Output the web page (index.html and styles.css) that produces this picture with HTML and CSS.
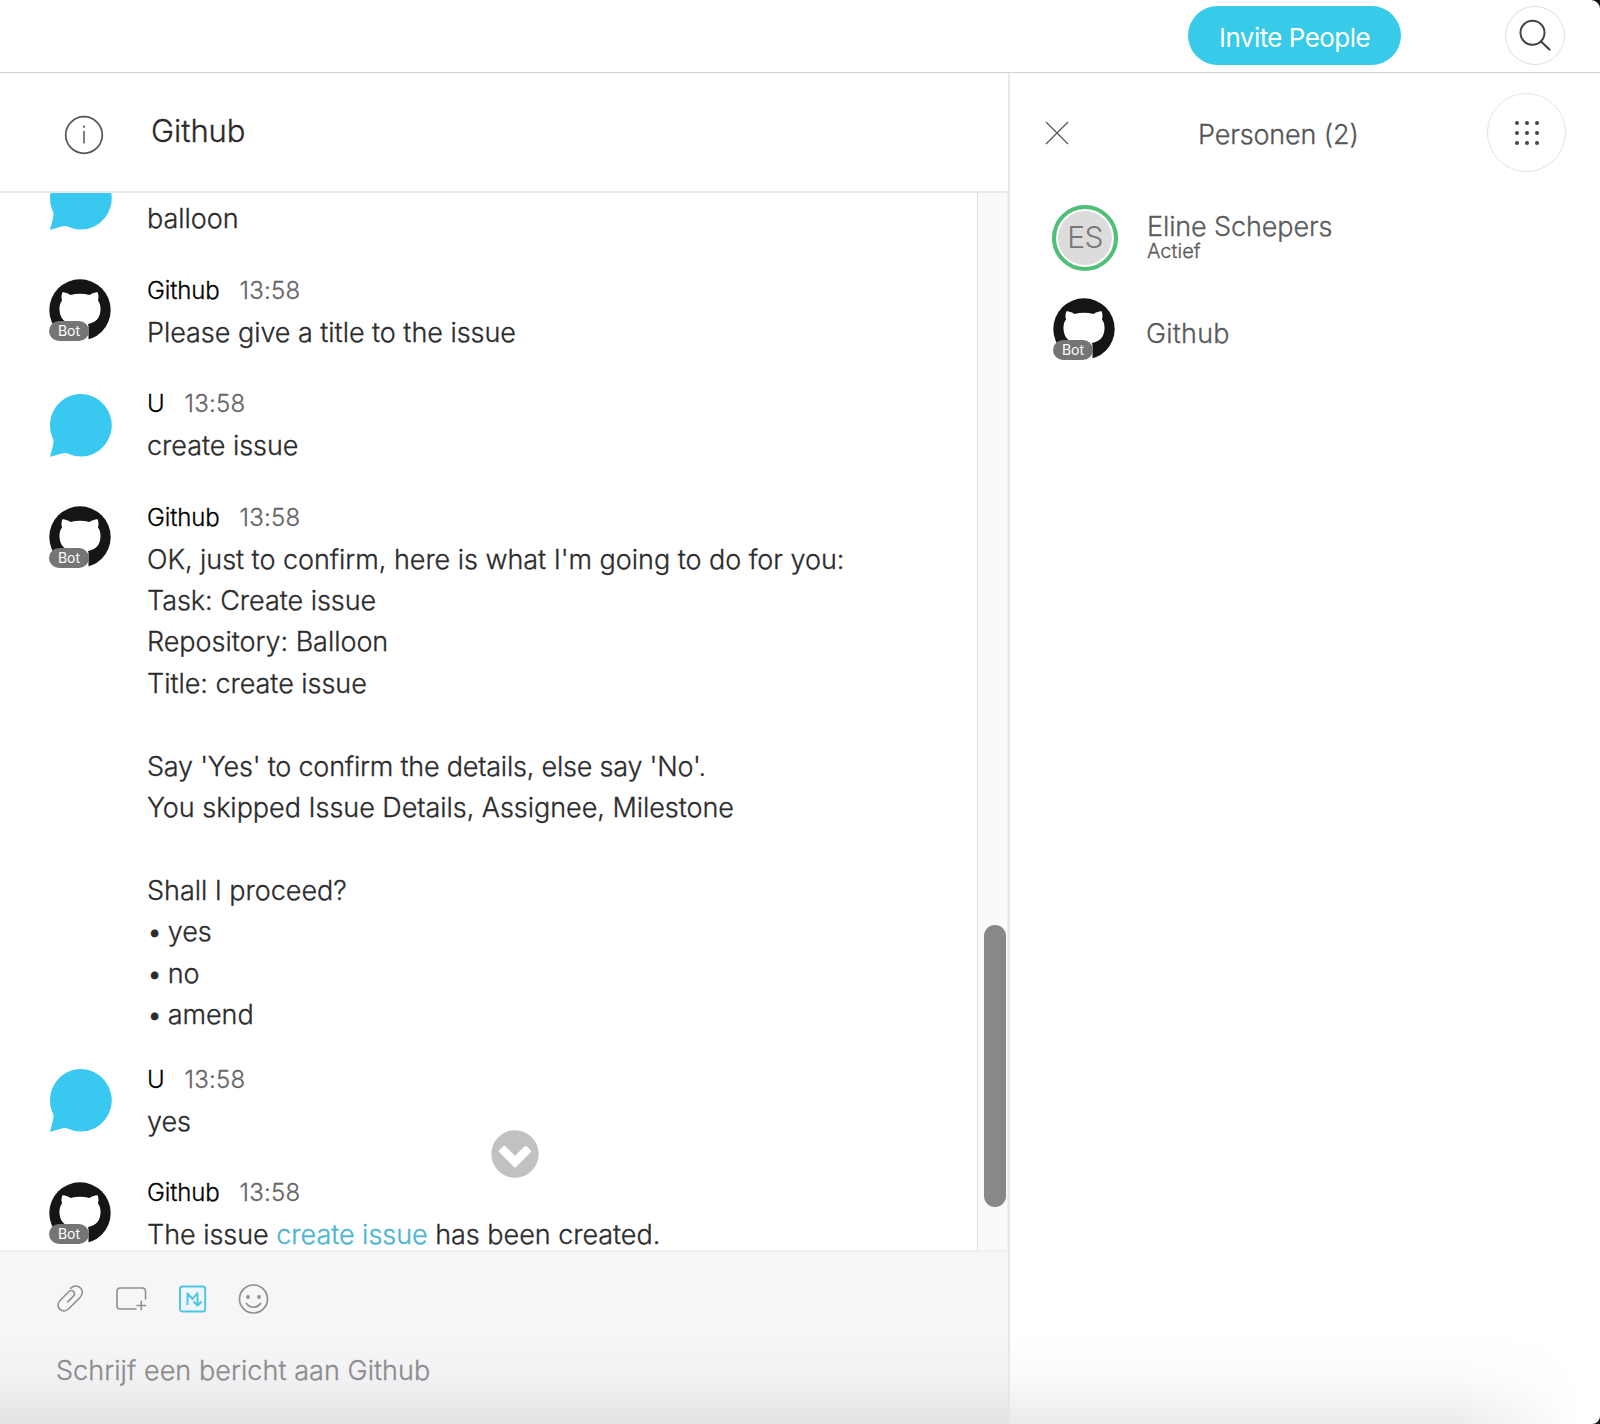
FILE: index.html
```html
<!DOCTYPE html>
<html lang="nl">
<head>
<meta charset="utf-8">
<title>Github</title>
<link rel="stylesheet" href="styles.css">
</head>
<body>
<svg class="defs" width="0" height="0" aria-hidden="true">
  <symbol id="octocat" viewBox="0 0 62 62"><circle cx="31" cy="31" r="30.700" fill="#161516"/><path fill="#fff" d="M13.300 13.500c.400-1 4.700.200 8.200 2.400 6-1.500 13-1.500 19 0 3.500-2.200 7.800-3.400 8.200-2.400 1 2.700 1 5.500.3 8 2 2.600 2.700 5.500 2.500 9.500-.400 8-4.500 12.500-12.500 14 .6 1.500.5 3 .5 5V62H23V45c-8-1.500-12.100-6-12.500-14-.2-4 .5-6.900 2.500-9.500-.7-2.500-.7-5.300.3-8z"/></symbol>
  <symbol id="bubble" viewBox="0 0 62 63"><path fill="#38c8f0" d="M31 0a31 31.300 0 1 1-13.500 59.600C15 58 12 59.800 0 62.700c1.700-6 3.800-13 3.500-17A31 31.300 0 0 1 31 0z"/></symbol>
</svg>
<div class="app">
  <header class="topbar">
    <button class="invite">Invite People</button>
    <button class="search"><svg width="60" height="60" viewBox="0 0 60 60" fill="none" stroke="#444" stroke-width="2"><circle cx="27.500" cy="26.800" r="12"/><path d="M36 35.500l8.500 8" stroke-width="2.200" stroke-linecap="round"/></svg></button>
  </header>
  <div class="main">
    <section class="chat">
      <div class="chat-head">
        <svg width="40" height="40" viewBox="0 0 40 40" fill="none" stroke="#555" stroke-width="1.700"><circle cx="20" cy="20" r="18.300"/><path d="M20 16v12.500" stroke-width="1.500"/><circle cx="20" cy="11.700" r="1.100" fill="#555" stroke="none"/></svg>
        <h1 class="title">Github</h1>
      </div>
      <div class="scroll">
        <div class="messages">
          <article class="msg">
            <div class="avatar"><svg class="user-icon"><use href="#bubble"/></svg></div>
            <div class="body"><div class="meta"></div><p class="text">balloon</p></div>
          </article>
          <article class="msg">
            <div class="avatar"><svg class="bot-icon"><use href="#octocat"/></svg><span class="badge">Bot</span></div>
            <div class="body"><div class="meta"><span class="name">Github</span><time class="time">13:58</time></div><p class="text">Please give a title to the issue</p></div>
          </article>
          <article class="msg">
            <div class="avatar"><svg class="user-icon"><use href="#bubble"/></svg></div>
            <div class="body"><div class="meta"><span class="name">U</span><time class="time">13:58</time></div><p class="text">create issue</p></div>
          </article>
          <article class="msg msg-list">
            <div class="avatar"><svg class="bot-icon"><use href="#octocat"/></svg><span class="badge">Bot</span></div>
            <div class="body"><div class="meta"><span class="name">Github</span><time class="time">13:58</time></div><p class="text">OK, just to confirm, here is what I'm going to do for you:<br>Task: Create issue<br>Repository: Balloon<br>Title: create issue<br><br><span class="tight">Say 'Yes' to confirm the details, else say 'No'.</span><br>You skipped Issue Details, Assignee, Milestone<br><br>Shall I proceed?</p>
            <ul class="text options"><li>yes</li><li>no</li><li>amend</li></ul></div>
          </article>
          <article class="msg">
            <div class="avatar"><svg class="user-icon"><use href="#bubble"/></svg></div>
            <div class="body"><div class="meta"><span class="name">U</span><time class="time">13:58</time></div><p class="text">yes</p></div>
          </article>
          <article class="msg msg-last">
            <div class="avatar"><svg class="bot-icon"><use href="#octocat"/></svg><span class="badge">Bot</span></div>
            <div class="body"><div class="meta"><span class="name">Github</span><time class="time">13:58</time></div><p class="text">The issue <a class="link">create issue</a> has been created.</p></div>
          </article>
        </div>
        <div class="track"><div class="thumb"></div></div>
        <svg class="jump" width="48" height="48" viewBox="0 0 48 48"><circle cx="24" cy="24" r="23.700" fill="#c1c1c3"/><path d="M8.300 20.200l4-4a1.500 1.500 0 0 1 2 0l9.700 9.500 9.700-9.500a1.500 1.500 0 0 1 2 0l4 4a1.500 1.500 0 0 1 0 2L25 37a1.500 1.500 0 0 1-2 0L8.300 22.200a1.500 1.500 0 0 1 0-2z" fill="#fff"/></svg>
      </div>
      <footer class="composer">
        <div class="tools">
          <svg width="30" height="32" viewBox="0 0 30 32" fill="none" stroke="#8f8f91" stroke-width="1.600" stroke-linecap="round"><path d="M14.500 5.300C18 2.300 22 2.500 24.500 5s2.500 6.500-.500 9.500L13 25.500c-3 3-6.800 3-9.200.700s-2.400-6 .400-8.900l8.300-8.300c1.700-1.700 3.800-1.700 5-.500s1.300 3.300-.300 4.900l-5.500 5.600"/></svg>
          <svg width="32" height="32" viewBox="0 0 32 32" fill="none" stroke="#8f8f91" stroke-width="1.600" stroke-linecap="round"><path d="M20 26H4A3 3 0 0 1 1 23V8a3 3 0 0 1 3-3h22.500a3 3 0 0 1 3 3v8M25.300 18.300v8.500M21.100 22.500h8.500"/></svg>
          <svg width="28" height="32" viewBox="0 0 28 32" fill="none" stroke="#4fc3e2" stroke-width="1.900"><rect x="1" y="3.500" width="25.200" height="25" rx="2.500" fill="#ebf7fb"/><path d="M8.500 22V10.500l5 5.500 5-6v12M14.500 18.500l4 4 4-4" stroke-linejoin="round"/></svg>
          <svg width="32" height="32" viewBox="0 0 32 32" fill="none" stroke="#8f8f91" stroke-width="1.700" stroke-linecap="round"><circle cx="15.500" cy="16" r="14"/><path d="M8.500 20.500c3.500 5 10.500 5 14 0"/><circle cx="10" cy="14" r="1.900" fill="#8f8f91" stroke="none"/><circle cx="21" cy="14" r="1.900" fill="#8f8f91" stroke="none"/></svg>
        </div>
        <div class="placeholder">Schrijf een bericht aan Github</div>
      </footer>
    </section>
    <aside class="people">
      <div class="people-head">
        <svg width="24" height="24" viewBox="0 0 24 24" stroke="#555" stroke-width="1.200"><path d="M1 1l22 22M23 1L1 23"/></svg>
        <h2 class="people-title">Personen (2)</h2>
        <button class="grid-btn"><svg width="26" height="26" viewBox="0 0 26 26" fill="#444"><circle cx="3" cy="3" r="2"/><circle cx="13" cy="3" r="2"/><circle cx="23" cy="3" r="2"/><circle cx="3" cy="13" r="2"/><circle cx="13" cy="13" r="2"/><circle cx="23" cy="13" r="2"/><circle cx="3" cy="23" r="2"/><circle cx="13" cy="23" r="2"/><circle cx="23" cy="23" r="2"/></svg></button>
      </div>
      <div class="person">
        <div class="initials">ES</div>
        <div><div class="person-name">Eline Schepers</div><div class="status">Actief</div></div>
      </div>
      <div class="person person-bot">
        <div class="avatar"><svg class="bot-icon"><use href="#octocat"/></svg><span class="badge">Bot</span></div>
        <div class="person-name">Github</div>
      </div>
    </aside>
  </div>
  <div class="shade shade-chat"></div>
  <div class="shade shade-people"></div>
</div>
</body>
</html>
```
FILE: styles.css
```css
* { box-sizing: border-box; }
html { background: #10151c; }
body { margin: 0; font-family: Inter, "Liberation Sans", sans-serif; font-weight: 300; color: #2b2b2d; -webkit-text-stroke: 0.300px; }
h1, h2, p, ul { margin: 0; padding: 0; font-weight: 300; }
button { font: inherit; padding: 0; border: 0; background: none; }
svg { display: block; flex: none; }
.defs { position: absolute; }

.app { position: relative; width: 1600px; height: 1424px; display: flex; flex-direction: column; background: #fff; border-radius: 0 9px 8px 0; overflow: hidden; }

.topbar { height: 73px; flex: none; display: flex; justify-content: flex-end; align-items: flex-start; gap: 104px; padding: 6px 35px 0 0; border-bottom: 1.500px solid #d2d2d2; }
.invite { width: 213px; height: 59px; border-radius: 30px; background: #37cbe9; color: #fff; font-size: 26px; font-weight: 400; letter-spacing: -0.550px; padding-top: 3px; -webkit-text-stroke: 0; }
.search { width: 60px; height: 59px; border: 1px solid #e0e0e0; border-radius: 50%; overflow: hidden; }
.search svg { margin: -1px; }

.main { flex: 1; min-height: 0; display: flex; }
.chat { width: 1008px; display: flex; flex-direction: column; }
.chat-head { height: 120px; flex: none; display: flex; align-items: flex-start; gap: 47px; padding: 42px 0 0 64px; border-bottom: 2px solid #e9e9e9; }
.title { font-size: 31px; line-height: 38px; letter-spacing: -0.050px; margin-top: -3px; }

.scroll { position: relative; height: 1057px; flex: none; display: flex; overflow: hidden; }
.messages { flex: 1; margin-top: -37.600px; padding-left: 49px; }
.msg { display: flex; height: 113.400px; }
.msg-list { height: 562.300px; }
.msg-last { height: 93px; }
.avatar { position: relative; width: 62px; height: 62px; margin: 10.500px 36px 0 0; flex: none; }
.bot-icon { width: 62px; height: 62px; }
.user-icon { width: 62px; height: 63px; margin: 1px 0 0 1px; }
.badge { position: absolute; left: 0; bottom: 0; width: 40px; height: 20px; border-radius: 10px; background: #757575; color: #fff; font-size: 14px; font-weight: 400; line-height: 19px; text-align: center; -webkit-text-stroke: 0; }
.meta { height: 43px; line-height: 43px; font-size: 24px; display: flex; gap: 20px; }
.name { color: #000; letter-spacing: -0.150px; }
.time { color: #666; letter-spacing: 0.250px; }
.text { font-size: 27px; line-height: 41.400px; letter-spacing: -0.040px; white-space: nowrap; }
.tight { letter-spacing: -0.220px; }
.msg-last .text { margin-top: 5.700px; line-height: 30px; }
.options { list-style: none; }
.options li::before { content: "•"; margin-right: 7px; letter-spacing: -1.500px; }
.link { color: #4db5d1; }
.track { width: 31px; border-left: 1px solid #dedede; border-right: 1px solid #eee; background: #fafafa; padding: 732px 0 0 6px; }
.thumb { width: 22px; height: 282px; border-radius: 11px; background: #888; }
.jump { position: absolute; left: 490.600px; top: 937px; }

.composer { flex: 1; background: #f6f6f8; border-top: 2px solid #f0f0f2; padding: 30.500px 0 0 56px; }
.tools { display: flex; height: 32px; }
.tools svg:nth-child(1) { margin-right: 30px; }
.tools svg:nth-child(2) { margin-right: 31px; }
.tools svg:nth-child(3) { margin-right: 31px; }
.placeholder { margin-top: 36.500px; font-size: 27px; line-height: 40px; letter-spacing: 0.050px; color: #8e8e90; }

.people { flex: 1; border-left: 2px solid #e8e8e8; }
.people-head { display: flex; align-items: center; height: 119px; padding: 0 34px 0 35px; }
.people-title { margin-left: 129px; font-size: 27px; letter-spacing: -0.150px; color: #555; padding-top: 4px; }
.grid-btn { width: 79px; height: 79px; margin-left: auto; border: 1px solid #e3e3e3; border-radius: 50%; display: flex; align-items: center; justify-content: center; }
.person { display: flex; gap: 29px; height: 93px; padding: 13px 0 0 42px; color: #5a5a5c; }
.initials { width: 66px; height: 66px; flex: none; border: 4.500px solid #4fc077; border-radius: 50%; background: #dcdcdc; box-shadow: inset 0 0 0 2px #fff; font-size: 30px; line-height: 56px; text-align: center; color: #777; letter-spacing: -0.700px; -webkit-text-stroke: 0; }
.person-name { font-size: 27px; line-height: 40px; letter-spacing: -0.120px; margin-top: 2px; }
.status { font-size: 20px; line-height: 24px; margin-top: -8px; }
.person-bot { padding: 13px 0 0 43px; }
.person-bot .avatar { margin: 0 2px 0 0; }
.person-bot .person-name { margin-top: 16px; letter-spacing: 0.200px; }

.shade { position: absolute; bottom: 0; height: 90px; pointer-events: none; background: linear-gradient(rgba(0,0,0,0), rgba(0,0,0,.02) 50%, rgba(0,0,0,.08)); }
.shade-chat { left: 0; width: 1008px; }
.shade-people { left: 1010px; right: 0; -webkit-mask: linear-gradient(90deg, #000 75%, transparent 97%); mask: linear-gradient(90deg, #000 75%, transparent 97%); }
```
